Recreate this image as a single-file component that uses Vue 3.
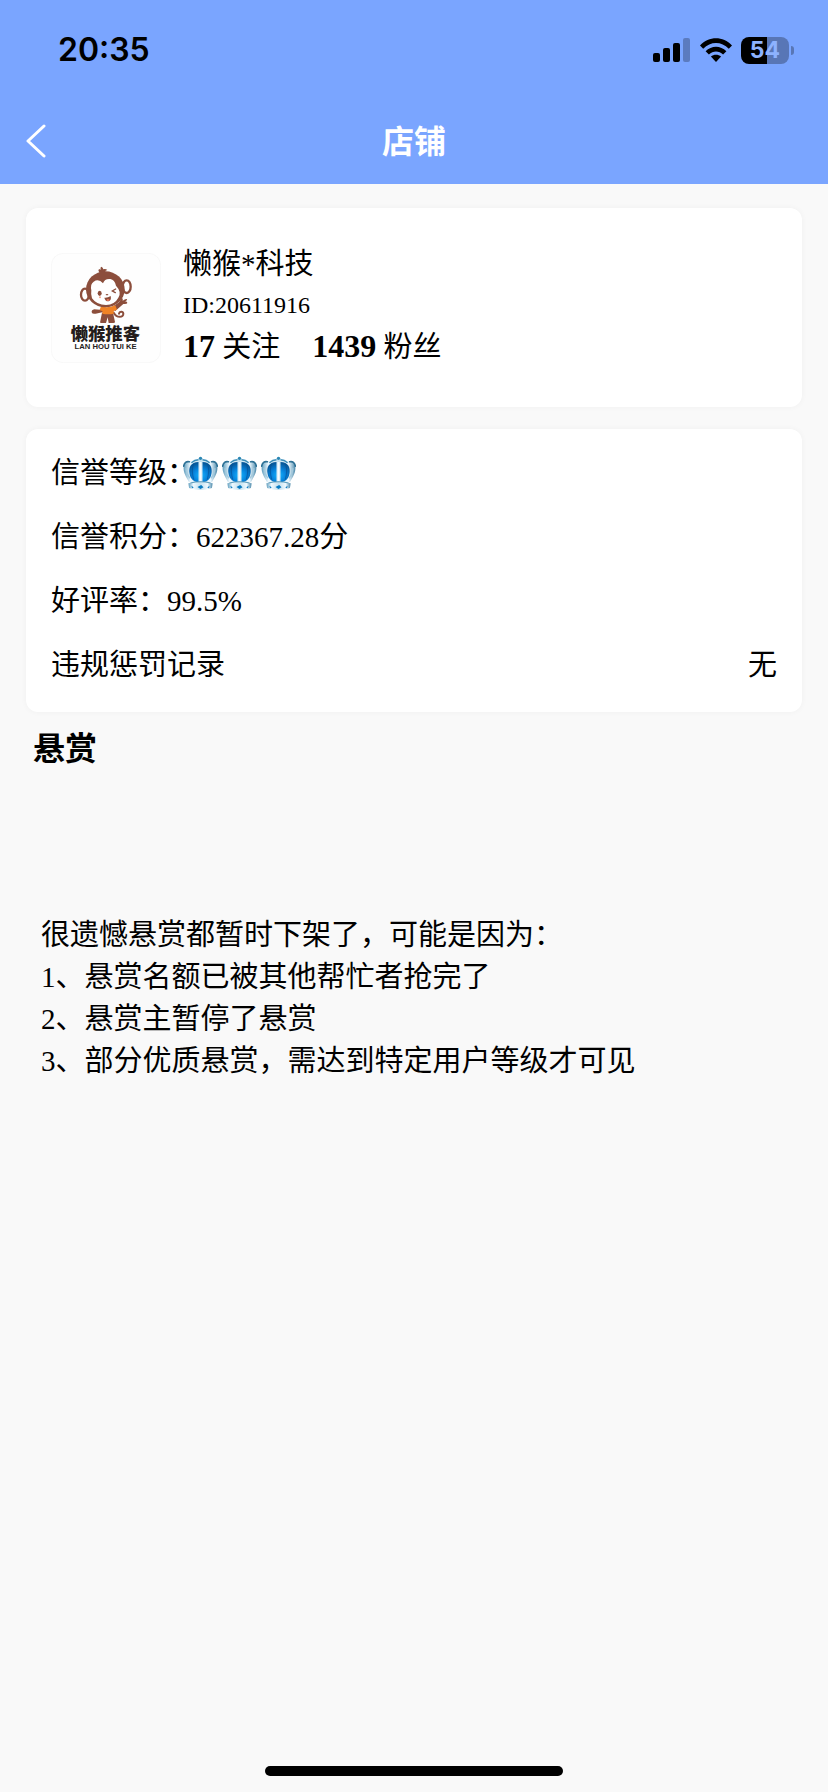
<template>
  <div class="shop-page">

    <!-- HEADER -->
    <header class="top">
      <div class="status-bar">
        <span class="time">20:35</span>
        <div class="status-icons">
          <svg class="signal" viewBox="0 0 38 24" aria-hidden="true">
            <rect x="0" y="15" width="7" height="9" rx="2" />
            <rect x="10" y="10" width="7" height="14" rx="2" />
            <rect x="20" y="5" width="7" height="19" rx="2" />
            <rect x="30" y="0" width="7" height="24" rx="2" opacity=".25" />
          </svg>
          <svg class="wifi" viewBox="0 0 32 24" aria-hidden="true">
            <path d="M0 7.4C9-2.2 23-2.2 32 7.4L28.8 10.7C21.6 3.2 10.4 3.2 3.2 10.7Z" />
            <path d="M5.6 13.2C11.5 7.2 20.5 7.2 26.4 13.2L23.1 16.5C19 12.6 13 12.6 8.9 16.5Z" />
            <path d="M10.9 18.6C13.8 16 18.2 16 21.1 18.6L16 24Z" />
          </svg>
          <div class="battery">
            <span class="battery-body">54</span>
            <span class="battery-cap"></span>
          </div>
        </div>
      </div>
      <nav class="nav-bar">
        <button class="back" type="button" aria-label="返回">
          <svg viewBox="0 0 20 34" aria-hidden="true">
            <path d="M18 2 2 17 18 32" />
          </svg>
        </button>
        <h1 class="title">店铺</h1>
      </nav>
    </header>

    <main class="content">

      <!-- PROFILE -->
      <section class="card profile">
        <svg class="avatar" viewBox="34 39 330 330" role="img" aria-label="懒猴推客">
          <rect x="35" y="40" width="328" height="328" rx="36" fill="#fefefe" stroke="#f4f4f4" stroke-width="2" />
          <!-- tail, legs, arms -->
          <path d="M222 218C232 236 252 232 251 221C250 213 239 214 238 221" fill="none" stroke="#8c4e3c" stroke-width="6" stroke-linecap="round" />
          <path d="M187 218H220L226 246Q226 249 221 249H207L204 232L199 249H183Q180 247 182 243Z" fill="#8c4e3c" />
          <path d="M190 200L180 209L164 208Q155 210 156 217Q158 223 168 221L191 216Z" fill="#8c4e3c" />
          <path d="M218 200L238 187L246 174Q251 175 249 182Q259 175 262 178Q264 181 255 185Q263 184 263 189Q262 193 251 192L226 214Z" fill="#8c4e3c" />
          <path d="M184 199Q204 206 227 196L232 209L222 213V221Q204 225 188 221V213L180 211Z" fill="#f08326" />
          <!-- head -->
          <ellipse cx="136" cy="164" rx="12" ry="18" fill="#fff" stroke="#8c4e3c" stroke-width="7" />
          <ellipse cx="261" cy="140" rx="12" ry="19" fill="#fff" stroke="#8c4e3c" stroke-width="7" />
          <path d="M179 98Q174 91 178 87L183 89Q181 82 185 80Q190 82 191 88Q197 85 203 90Q196 91 196 97Z" fill="#8c4e3c" />
          <ellipse cx="197" cy="148" rx="58" ry="54" fill="#8c4e3c" />
          <path d="M155 151Q151 132 162 125Q177 115 190 130Q195 115 212 117Q225 119 229 137Q247 156 236 173Q225 194 199 195Q171 195 157 175Q153 163 155 151Z" fill="#fff" />
          <ellipse cx="180" cy="160" rx="6" ry="8" fill="#8c4e3c" />
          <path d="M228 147L218 153L227 158" fill="none" stroke="#8c4e3c" stroke-width="4" stroke-linecap="round" />
          <ellipse cx="202" cy="164" rx="4" ry="2" fill="#8c4e3c" />
          <path d="M194 173Q204 174 213 168Q216 181 207 184Q197 185 194 173Z" fill="#8c4e3c" />
          <path d="M200 181Q204 174 210 180Q206 185 200 181Z" fill="#ee765b" />
          <circle cx="181" cy="172" r="3" fill="#f4a58b" />
          <text class="logo-cn" x="197" y="301" text-anchor="middle">懒猴推客</text>
          <text class="logo-en" x="198" y="328" text-anchor="middle">LAN HOU TUI KE</text>
        </svg>
        <div class="info">
          <div class="name">{{ shop.name }}</div>
          <div class="shop-id">ID:{{ shop.id }}</div>
          <div class="stats">
            <span><b>{{ shop.follows }}</b> 关注</span>
            <span><b>{{ shop.fans }}</b> 粉丝</span>
          </div>
        </div>
      </section>

      <!-- CREDIT -->
      <section class="card credit">
        <div class="row">
          <span>信誉等级：</span>
          <span class="crowns">
            <svg v-for="n in shop.level" :key="n" class="crown" viewBox="0 0 104 104" aria-hidden="true">
              <defs>
                <radialGradient :id="'gem' + n" cx=".5" cy=".65" r=".6">
                  <stop offset="0" stop-color="#14b4ff" />
                  <stop offset=".55" stop-color="#0681da" />
                  <stop offset="1" stop-color="#075a9c" />
                </radialGradient>
                <linearGradient :id="'metal' + n">
                  <stop offset="0" stop-color="#5f9dbd" />
                  <stop offset=".2" stop-color="#eef9ff" />
                  <stop offset=".5" stop-color="#c4e0ee" />
                  <stop offset=".8" stop-color="#eef9ff" />
                  <stop offset="1" stop-color="#4a88aa" />
                </linearGradient>
              </defs>
              <path d="M18 78C10 62 0 50 2 31C4 18 12 12 22 17Q34 9 45 10L52 2L59 10Q70 9 82 17C92 12 100 18 102 31C104 50 94 62 86 78Z" :fill="`url(#metal${n})`" />
              <path d="M2 30Q5 14 19 17M102 30Q99 14 85 17" fill="none" stroke="#2f7296" stroke-width="5" stroke-linecap="round" />
              <path d="M25 20Q35 11 46 11M79 20Q69 11 58 11" fill="none" stroke="#3b8db8" stroke-width="4" />
              <path d="M9 36Q10 53 21 66M95 36Q94 53 83 66" fill="none" stroke="#a3cade" stroke-width="4" />
              <path d="M46 18C22 18 17 36 19 50Q21 68 34 75Q40 78 46 78ZM58 18C82 18 87 36 85 50Q83 68 70 75Q64 78 58 78Z" :fill="`url(#gem${n})`" />
              <path d="M31 24Q24 42 32 70M73 24Q80 42 72 70" fill="none" stroke="#064f91" stroke-width="3" opacity=".6" />
              <path d="M49 18H55V77H49Z" fill="#f6fcff" />
              <path d="M16 81Q52 72 88 81L86 95Q52 107 18 95Z" :fill="`url(#metal${n})`" />
              <path d="M22 80Q52 73 82 80" fill="none" stroke="#5b9ab9" stroke-width="3" />
              <path d="M43 92L54 86L61 93L52 98ZM25 89L32 93L27 96ZM79 89L72 93L77 96Z" fill="#087bc2" />
              <circle cx="52" cy="7" r="5" fill="#2a86b3" />
            </svg>
          </span>
        </div>
        <div class="row">信誉积分：{{ shop.score }}分</div>
        <div class="row">好评率：{{ shop.rate }}</div>
        <div class="row">
          <span>违规惩罚记录</span>
          <span class="value">{{ shop.penalty }}</span>
        </div>
      </section>

      <!-- REWARDS -->
      <h2 class="section-title">悬赏</h2>
      <div class="empty">
        <p>很遗憾悬赏都暂时下架了，可能是因为：</p>
        <p v-for="(reason, i) in reasons" :key="reason">{{ i + 1 }}、{{ reason }}</p>
      </div>
    </main>

    <div class="home-indicator"></div>
  </div>
</template>

<script setup>
const shop = {
  name: '懒猴*科技',
  id: '20611916',
  follows: 17,
  fans: 1439,
  level: 3,
  score: '622367.28',
  rate: '99.5%',
  penalty: '无',
}

const reasons = [
  '悬赏名额已被其他帮忙者抢完了',
  '悬赏主暂停了悬赏',
  '部分优质悬赏，需达到特定用户等级才可见',
]
</script>

<style>
body { margin: 0; background: #f9f9f9; }
</style>

<style scoped>
.shop-page {
  min-height: 100vh;
  box-sizing: border-box;
  display: flex;
  flex-direction: column;
  background: #f9f9f9;
  color: #000;
  font-family: 'Liberation Serif', 'Noto Sans CJK SC', serif;
  font-size: 29px;
  line-height: 42px;
}

/* HEADER */
.top { background: #7aa5ff; }
.status-bar {
  height: 100px;
  box-sizing: border-box;
  padding: 0 34px 0 58px;
  display: flex;
  justify-content: space-between;
  align-items: center;
  font-family: Inter, sans-serif;
}
.time { font-size: 32px; font-weight: 600; }
.status-icons { display: flex; align-items: center; gap: 9px; }
.signal { width: 38px; height: 24px; }
.wifi { width: 32px; height: 24px; }
.battery { display: flex; align-items: center; gap: 2px; }
.battery-body {
  width: 48px;
  height: 27px;
  border-radius: 8px;
  background: linear-gradient(to right, #000 54%, #5876b6 54%);
  color: #8db2ff;
  font-size: 23px;
  font-weight: 700;
  line-height: 27px;
  text-align: center;
}
.battery-cap { width: 3px; height: 9px; border-radius: 0 4px 4px 0; background: #5876b6; }

.nav-bar {
  height: 84px;
  box-sizing: border-box;
  padding: 0 26px 6px;
  display: grid;
  grid-template-columns: 60px 1fr 60px;
  align-items: center;
}
.back {
  height: 60px;
  padding: 4px 0 0;
  border: 0;
  background: none;
  display: flex;
  align-items: center;
}
.back svg {
  width: 20px;
  height: 34px;
  fill: none;
  stroke: #fff;
  stroke-width: 3;
  stroke-linecap: round;
  stroke-linejoin: round;
}
.title {
  margin: 0;
  color: #fff;
  font-family: 'Noto Sans CJK SC', sans-serif;
  font-size: 32px;
  font-weight: 700;
  line-height: 40px;
  text-align: center;
}

/* CARDS */
.content { padding: 24px 26px; }
.card {
  margin-bottom: 22px;
  padding: 12px 25px 15px;
  border-radius: 12px;
  background: #fff;
  box-shadow: 0 0 6px rgba(0, 0, 0, .04);
}
.profile {
  min-height: 199px;
  box-sizing: border-box;
  padding: 34px 25px;
  display: flex;
  align-items: center;
  gap: 22px;
}
.avatar { width: 110px; height: 110px; flex: none; }
.logo-cn { font-family: 'Noto Sans CJK SC', sans-serif; font-size: 52px; font-weight: 900; fill: #241d1c; }
.logo-en { font-family: 'Liberation Sans', sans-serif; font-size: 23px; font-weight: 700; fill: #241d1c; }
.info { padding-bottom: 4px; line-height: 41px; }
.shop-id { font-size: 24px; }
.stats { display: flex; gap: 32px; }
.stats b { font-size: 32px; }

/* CREDIT */
.row { min-height: 64px; display: flex; align-items: center; }
.value { margin-left: auto; }
.crowns { display: flex; gap: 4px; margin-left: -13px; }
.crown { width: 35px; height: 35px; }

/* REWARDS */
.section-title {
  margin: -6px 7px 0;
  font-size: 32px;
  font-weight: 700;
}
.empty { padding: 144px 15px 0; }
.empty p { margin: 0; }

.home-indicator {
  width: 36%;
  height: 10px;
  margin: auto auto 16px;
  border-radius: 5px;
  background: #000;
}
</style>
